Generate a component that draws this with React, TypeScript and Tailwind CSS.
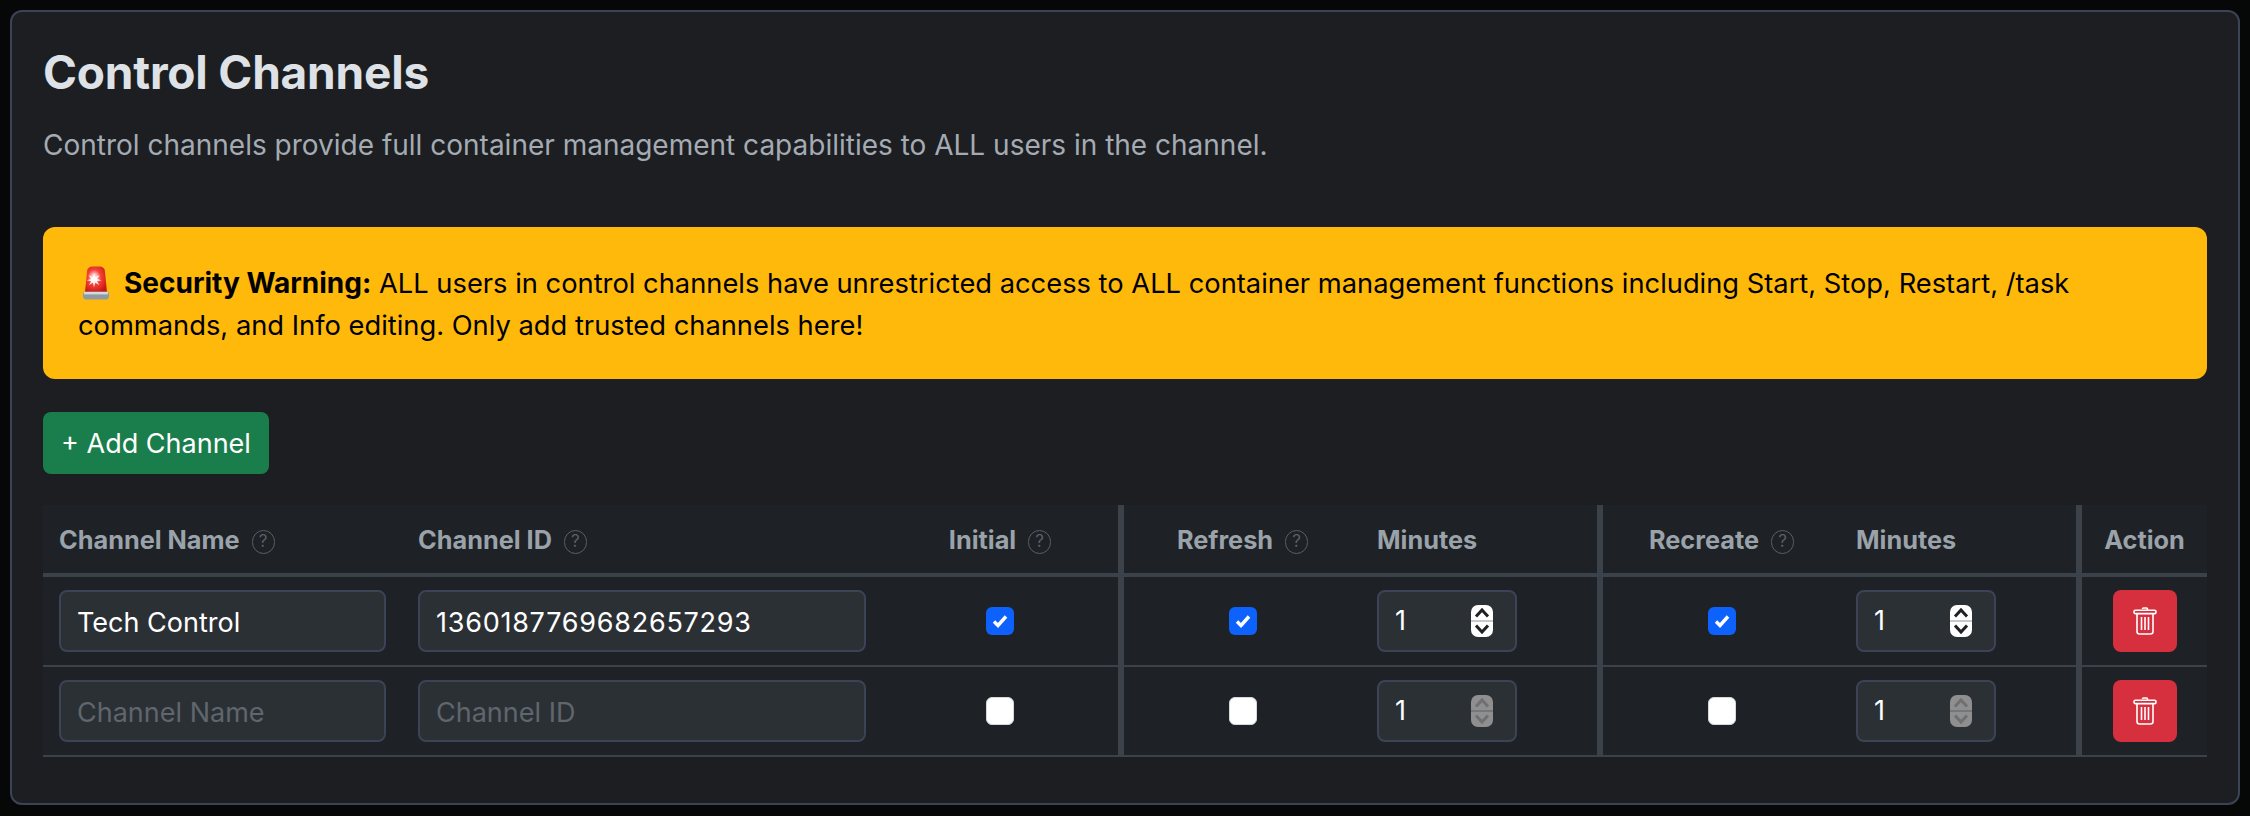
import React from "react";

function Help() {
  return (
    <span className="inline-flex w-[23px] h-[24px] ml-[12px] rounded-full border-[1.5px] border-[#5a6067] text-[#5a6067] text-[17px] font-normal items-center justify-center align-[2px] leading-none">
      ?
    </span>
  );
}

function Siren() {
  return (
    <svg width="28" height="34" viewBox="0 0 28 34" className="inline-block align-[-7px] ml-[4px] mr-[14px]">
      <defs>
        <radialGradient id="glow" cx="0.42" cy="0.42" r="0.65">
          <stop offset="0" stopColor="#ffffff" />
          <stop offset="0.18" stopColor="#ffc4c0" />
          <stop offset="0.45" stopColor="#f4423a" />
          <stop offset="1" stopColor="#c9150f" />
        </radialGradient>
      </defs>
      <path d="M5 6 Q5 0.5 11 0.5 H17 Q23 0.5 23 6 L25 26 H3 Z" fill="url(#glow)" />
      <path d="M12 7 l1.2 4.6 4.3 -2.6 -2.6 4 4.8 1.2 -4.8 1 2.6 4 -4.3 -2.6 -1.2 4.6 -1.1 -4.6 -4.2 2.6 2.6 -4 -4.6 -1 4.6 -1.2 -2.6 -4 4.2 2.6 z" fill="#fff" opacity="0.9" />
      <path d="M1 28 Q1 25.5 3.5 25.5 H24.5 Q27 25.5 27 28 L27 30.5 Q27 33.5 23.5 33.5 H4.5 Q1 33.5 1 30.5 Z" fill="#8f9aa3" />
      <rect x="2" y="26" width="24" height="2.4" fill="#d3d9dd" />
    </svg>
  );
}

function Check({ on }: { on: boolean }) {
  if (on) {
    return (
      <span className="inline-flex w-[28px] h-[28px] rounded-[6px] bg-[#0d62fd] items-center justify-center align-middle">
        <svg width="20" height="20" viewBox="0 0 20 20" fill="none">
          <path d="M4 10.5 L8 14.5 L16 5.5" stroke="#fff" strokeWidth="3.4" />
        </svg>
      </span>
    );
  }
  return <span className="inline-block w-[28px] h-[28px] rounded-[6px] bg-white border border-[#d5d9dd] align-middle" />;
}

function NumberBox({ active }: { active: boolean }) {
  const stroke = active ? "#1f2125" : "#6f7072";
  return (
    <div className="w-[140px] h-[62px] rounded-[8px] border-2 border-[#3c4356] bg-[#2b3035] flex items-center pl-[16px] pr-[22px] text-white text-[27px]">
      <span className="flex-1">1</span>
      <span className={`w-[22px] h-[32px] rounded-[7px] flex flex-col overflow-hidden ${active ? "bg-white" : "bg-[#8f8f90]"}`}>
        <svg width="22" height="15" viewBox="0 0 22 15" fill="none">
          <path d="M5 11.5 L11 5 L17 11.5" stroke={stroke} strokeWidth="3" />
        </svg>
        <span className={`h-[2px] ${active ? "bg-[#c9c9c9]" : "bg-[#76777a]"}`} />
        <svg width="22" height="15" viewBox="0 0 22 15" fill="none">
          <path d="M5 3.5 L11 10 L17 3.5" stroke={stroke} strokeWidth="3" />
        </svg>
      </span>
    </div>
  );
}

function Trash() {
  return (
    <button className="w-[64px] h-[62px] rounded-[8px] bg-[#d6303f] flex items-center justify-center">
      <svg width="24" height="28" viewBox="0 0 24 28" fill="none" stroke="#fff" strokeWidth="1.6">
        <path d="M9.5 2 Q9.5 1 10.5 1 H13.5 Q14.5 1 14.5 2 V3" />
        <rect x="1" y="3.2" width="22" height="3.4" rx="1.4" />
        <path d="M4 6.6 V24.5 Q4 27 6.5 27 H17.5 Q20 27 20 24.5 V6.6" />
        <path d="M8.5 10 V23 M12 10 V23 M15.5 10 V23" />
      </svg>
    </button>
  );
}

const inputClass =
  "w-full h-[62px] rounded-[8px] border-2 border-[#3c4356] bg-[#2b3035] px-[16px] pt-[2px] text-white text-[27px] outline-none placeholder:text-[#5f666d]";
const th = "h-[72px] border-b-4 border-[#3b4249] px-[16px] pt-[2px] text-[25.3px] font-bold text-[#9aa2aa] align-middle";
const td = "h-[90px] border-b-2 border-[#3b4249] px-[16px] align-middle";
const sep = "border-r-[6px] border-r-[#3b4249]";

function Row({ name, id, on }: { name: string; id: string; on: boolean }) {
  return (
    <tr>
      <td className={td}>
        <input className={inputClass} defaultValue={name} placeholder="Channel Name" />
      </td>
      <td className={td}>
        <input className={`${inputClass} ${id ? "tracking-[0.75px]" : ""}`} defaultValue={id} placeholder="Channel ID" />
      </td>
      <td className={`${td} ${sep} text-center`}>
        <Check on={on} />
      </td>
      <td className={`${td} text-center`}>
        <Check on={on} />
      </td>
      <td className={`${td} ${sep}`}>
        <NumberBox active={on} />
      </td>
      <td className={`${td} text-center`}>
        <Check on={on} />
      </td>
      <td className={`${td} ${sep}`}>
        <NumberBox active={on} />
      </td>
      <td className={td}>
        <div className="flex justify-center">
          <Trash />
        </div>
      </td>
    </tr>
  );
}

export default function App() {
  return (
    <div className="w-[2250px] h-[816px] bg-[#050807] p-[10px] font-['Inter',sans-serif] overflow-hidden">
      <div className="w-[2230px] h-[795px] rounded-[12px] border-2 border-[#3c4356] bg-[#1c1e22] px-[31px] pt-[32px]">
        <h2 className="text-[46px] leading-[56px] font-bold tracking-[-0.2px] text-[#dee2e6]">Control Channels</h2>
        <p className="mt-[24px] text-[28px] leading-[42px] text-[#a4abb3]">
          Control channels provide full container management capabilities to ALL users in the channel.
        </p>
        <div className="mt-[61px] h-[152px] rounded-[12px] bg-[#ffb90a] px-[35px] pt-[35px] text-[27.3px] leading-[42px] text-black">
          <Siren />
          <strong className="font-bold text-[28px]">Security Warning:</strong> ALL users in control channels have unrestricted access to ALL container management functions including Start, Stop, Restart, /task commands, and Info editing. Only add trusted channels here!
        </div>
        <button className="mt-[33px] block w-[226px] h-[62px] rounded-[8px] bg-[#1a7d4c] pt-[2px] text-white text-[27px]">
          + Add Channel
        </button>
        <table className="mt-[31px] w-[2164px] table-fixed border-separate border-spacing-0 bg-[#1e2125]">
          <colgroup>
            <col className="w-[359px]" />
            <col className="w-[480px]" />
            <col className="w-[242px]" />
            <col className="w-[237px]" />
            <col className="w-[242px]" />
            <col className="w-[237px]" />
            <col className="w-[242px]" />
            <col className="w-[125px]" />
          </colgroup>
          <thead>
            <tr>
              <th className={`${th} text-left`}>Channel Name<Help /></th>
              <th className={`${th} text-left`}>Channel ID<Help /></th>
              <th className={`${th} ${sep} text-center`}>Initial<Help /></th>
              <th className={`${th} text-center`}>Refresh<Help /></th>
              <th className={`${th} ${sep} text-left`}>Minutes</th>
              <th className={`${th} text-center`}>Recreate<Help /></th>
              <th className={`${th} ${sep} text-left`}>Minutes</th>
              <th className={`${th} text-center`}>Action</th>
            </tr>
          </thead>
          <tbody>
            <Row name="Tech Control" id="1360187769682657293" on={true} />
            <Row name="" id="" on={false} />
          </tbody>
        </table>
      </div>
    </div>
  );
}
